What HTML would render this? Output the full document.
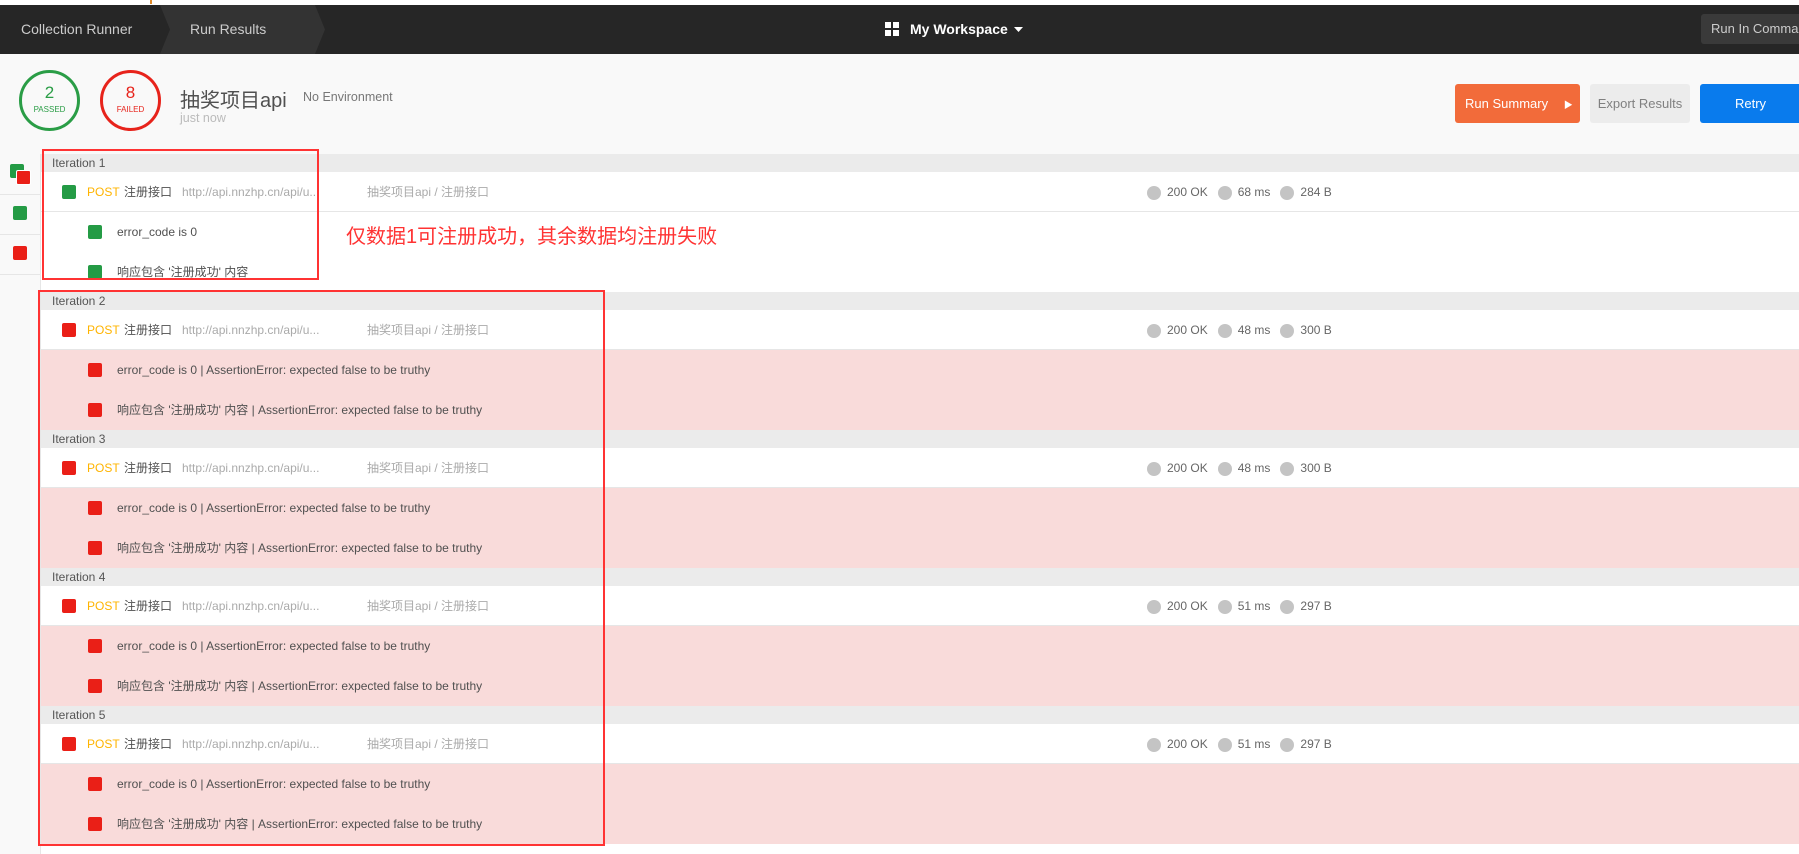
<!DOCTYPE html>
<html><head><meta charset="utf-8"><style>
*{margin:0;padding:0;box-sizing:border-box}
body{width:1799px;height:851px;overflow:hidden;background:#fff;font-family:"Liberation Sans","Noto Sans CJK SC",sans-serif;position:relative;color:#505050}
.a{position:absolute;white-space:nowrap}
.hdr{position:absolute;left:0;top:5px;width:1799px;height:49px;background:#262626}
.sub{position:absolute;left:0;top:54px;width:1799px;height:100px;background:#f9f9f9}
.sq{position:absolute;width:14px;height:14px;border-radius:2px}
.g{background:#249b45}.r{background:#ea1f17}
.bar{position:absolute;left:41px;width:1758px;height:18px;background:#ebebeb;font-size:12px;color:#555;padding-left:11px;line-height:18px}
.row{position:absolute;left:41px;width:1758px;height:40px;font-size:12px;line-height:40px}
.post{background:#fff;border-bottom:1px solid #e6e6e6}
.pink{background:#f9dbda}
.dot{display:inline-block;width:14px;height:14px;border-radius:50%;background:#c4c4c4;vertical-align:middle;margin-right:6px}
</style></head><body>
<div class="a" style="left:150px;top:0;width:2px;height:4px;background:#e08a2a"></div>
<div class="hdr"></div>
<svg class="a" style="left:150px;top:5px" width="175" height="49"><polygon points="10,0 165,0 175,24.5 165,49 10,49 20,24.5" fill="#333"/></svg>
<div class="a" style="left:21px;top:21px;font-size:14px;color:#ccc">Collection Runner</div>
<div class="a" style="left:190px;top:21px;font-size:14px;color:#ccc">Run Results</div>
<svg class="a" style="left:885px;top:22px" width="14" height="14"><rect x="0" y="0" width="6" height="6" fill="#fff"/><rect x="8" y="0" width="6" height="6" fill="#fff"/><rect x="0" y="8" width="6" height="6" fill="#fff"/><rect x="8" y="8" width="6" height="6" fill="#fff"/></svg>
<div class="a" style="left:910px;top:21px;font-size:14px;color:#fff;font-weight:bold">My Workspace</div>
<svg class="a" style="left:1014px;top:27px" width="9" height="5"><polygon points="0,0 9,0 4.5,5" fill="#fff"/></svg>
<div class="a" style="left:1701px;top:14px;width:110px;height:30px;background:#3a3a3a;border-radius:3px;font-size:13px;color:#ccc;line-height:30px;padding-left:10px">Run In Command</div>
<div class="sub"></div>
<div class="a" style="left:19px;top:70px;width:61px;height:61px;border:3px solid #2a9d46;border-radius:50%;text-align:center;color:#2a9d46"><div style="font-size:17px;margin-top:10px">2</div><div style="font-size:8px;margin-top:2px">PASSED</div></div>
<div class="a" style="left:100px;top:70px;width:61px;height:61px;border:3px solid #e7231b;border-radius:50%;text-align:center;color:#e7231b"><div style="font-size:17px;margin-top:10px">8</div><div style="font-size:8px;margin-top:2px">FAILED</div></div>
<div class="a" style="left:180px;top:84px;font-size:20px;color:#505050">抽奖项目api</div>
<div class="a" style="left:303px;top:90px;font-size:12.5px;color:#777">No Environment</div>
<div class="a" style="left:180px;top:111px;font-size:12.5px;color:#bbb">just now</div>
<div class="a" style="left:1455px;top:84px;width:125px;height:39px;background:#f26b3a;border-radius:3px;color:#fff;font-size:13px;line-height:39px;padding-left:10px">Run Summary <span style="font-size:9px;margin-left:12px">▶</span></div>
<div class="a" style="left:1590px;top:84px;width:100px;height:39px;background:#ececec;border-radius:3px;color:#808080;font-size:13px;line-height:39px;text-align:center">Export Results</div>
<div class="a" style="left:1700px;top:84px;width:110px;height:39px;background:#097bed;border-radius:3px;color:#fff;font-size:13px;line-height:39px;padding-left:35px">Retry</div>
<!-- sidebar -->
<div class="a" style="left:0;top:154px;width:41px;height:700px;background:#f9f9f9;border-right:1px solid #e6e6e6"></div>
<div class="a" style="left:0;top:194px;width:41px;height:1px;background:#e6e6e6"></div>
<div class="a" style="left:0;top:234px;width:41px;height:1px;background:#e6e6e6"></div>
<div class="a" style="left:0;top:274px;width:41px;height:1px;background:#e6e6e6"></div>
<div class="sq g" style="left:10px;top:164px"></div><div class="sq r" style="left:16px;top:170px;border:1px solid #fff;width:15px;height:15px"></div>
<div class="sq g" style="left:13px;top:206px"></div>
<div class="sq r" style="left:13px;top:246px"></div>

<!-- iteration 1 -->
<div class="bar" style="top:154px">Iteration 1</div>
<div class="row post" style="top:172px"><div class="sq g" style="left:21px;top:13px"></div><span class="a" style="left:46px;color:#ffb400">POST</span><span class="a" style="left:83px;color:#505050">注册接口</span><span class="a" style="left:141px;color:#aaa">http://api.nnzhp.cn/api/u...</span><span class="a" style="left:326px;color:#aaa">抽奖项目api / 注册接口</span><span class="a" style="left:1106px;color:#666"><i class="dot"></i>200 OK&nbsp;&nbsp;&nbsp;<i class="dot"></i>68 ms&nbsp;&nbsp;&nbsp;<i class="dot"></i>284 B</span></div>
<div class="row" style="top:212px"><div class="sq g" style="left:47px;top:13px"></div><span class="a" style="left:76px">error_code is 0</span></div>
<div class="row" style="top:252px"><div class="sq g" style="left:47px;top:13px"></div><span class="a" style="left:76px">响应包含 '注册成功' 内容</span></div>

<!-- iterations 2-5 -->
<div class="bar" style="top:292px">Iteration 2</div>
<div class="row post" style="top:310px"><div class="sq r" style="left:21px;top:13px"></div><span class="a" style="left:46px;color:#ffb400">POST</span><span class="a" style="left:83px">注册接口</span><span class="a" style="left:141px;color:#aaa">http://api.nnzhp.cn/api/u...</span><span class="a" style="left:326px;color:#aaa">抽奖项目api / 注册接口</span><span class="a" style="left:1106px;color:#666"><i class="dot"></i>200 OK&nbsp;&nbsp;&nbsp;<i class="dot"></i>48 ms&nbsp;&nbsp;&nbsp;<i class="dot"></i>300 B</span></div>
<div class="row pink" style="top:350px"><div class="sq r" style="left:47px;top:13px"></div><span class="a" style="left:76px">error_code is 0 | AssertionError: expected false to be truthy</span></div>
<div class="row pink" style="top:390px"><div class="sq r" style="left:47px;top:13px"></div><span class="a" style="left:76px">响应包含 '注册成功' 内容 | AssertionError: expected false to be truthy</span></div>

<div class="bar" style="top:430px">Iteration 3</div>
<div class="row post" style="top:448px"><div class="sq r" style="left:21px;top:13px"></div><span class="a" style="left:46px;color:#ffb400">POST</span><span class="a" style="left:83px">注册接口</span><span class="a" style="left:141px;color:#aaa">http://api.nnzhp.cn/api/u...</span><span class="a" style="left:326px;color:#aaa">抽奖项目api / 注册接口</span><span class="a" style="left:1106px;color:#666"><i class="dot"></i>200 OK&nbsp;&nbsp;&nbsp;<i class="dot"></i>48 ms&nbsp;&nbsp;&nbsp;<i class="dot"></i>300 B</span></div>
<div class="row pink" style="top:488px"><div class="sq r" style="left:47px;top:13px"></div><span class="a" style="left:76px">error_code is 0 | AssertionError: expected false to be truthy</span></div>
<div class="row pink" style="top:528px"><div class="sq r" style="left:47px;top:13px"></div><span class="a" style="left:76px">响应包含 '注册成功' 内容 | AssertionError: expected false to be truthy</span></div>

<div class="bar" style="top:568px">Iteration 4</div>
<div class="row post" style="top:586px"><div class="sq r" style="left:21px;top:13px"></div><span class="a" style="left:46px;color:#ffb400">POST</span><span class="a" style="left:83px">注册接口</span><span class="a" style="left:141px;color:#aaa">http://api.nnzhp.cn/api/u...</span><span class="a" style="left:326px;color:#aaa">抽奖项目api / 注册接口</span><span class="a" style="left:1106px;color:#666"><i class="dot"></i>200 OK&nbsp;&nbsp;&nbsp;<i class="dot"></i>51 ms&nbsp;&nbsp;&nbsp;<i class="dot"></i>297 B</span></div>
<div class="row pink" style="top:626px"><div class="sq r" style="left:47px;top:13px"></div><span class="a" style="left:76px">error_code is 0 | AssertionError: expected false to be truthy</span></div>
<div class="row pink" style="top:666px"><div class="sq r" style="left:47px;top:13px"></div><span class="a" style="left:76px">响应包含 '注册成功' 内容 | AssertionError: expected false to be truthy</span></div>

<div class="bar" style="top:706px">Iteration 5</div>
<div class="row post" style="top:724px"><div class="sq r" style="left:21px;top:13px"></div><span class="a" style="left:46px;color:#ffb400">POST</span><span class="a" style="left:83px">注册接口</span><span class="a" style="left:141px;color:#aaa">http://api.nnzhp.cn/api/u...</span><span class="a" style="left:326px;color:#aaa">抽奖项目api / 注册接口</span><span class="a" style="left:1106px;color:#666"><i class="dot"></i>200 OK&nbsp;&nbsp;&nbsp;<i class="dot"></i>51 ms&nbsp;&nbsp;&nbsp;<i class="dot"></i>297 B</span></div>
<div class="row pink" style="top:764px"><div class="sq r" style="left:47px;top:13px"></div><span class="a" style="left:76px">error_code is 0 | AssertionError: expected false to be truthy</span></div>
<div class="row pink" style="top:804px"><div class="sq r" style="left:47px;top:13px"></div><span class="a" style="left:76px">响应包含 '注册成功' 内容 | AssertionError: expected false to be truthy</span></div>

<!-- annotations -->
<div class="a" style="left:42px;top:149px;width:277px;height:131px;border:2px solid #f33"></div>
<div class="a" style="left:38px;top:290px;width:567px;height:556px;border:2px solid #f33"></div>
<div class="a" style="left:346px;top:220px;font-size:20px;color:#f33">仅数据1可注册成功，其余数据均注册失败</div>
</body></html>
